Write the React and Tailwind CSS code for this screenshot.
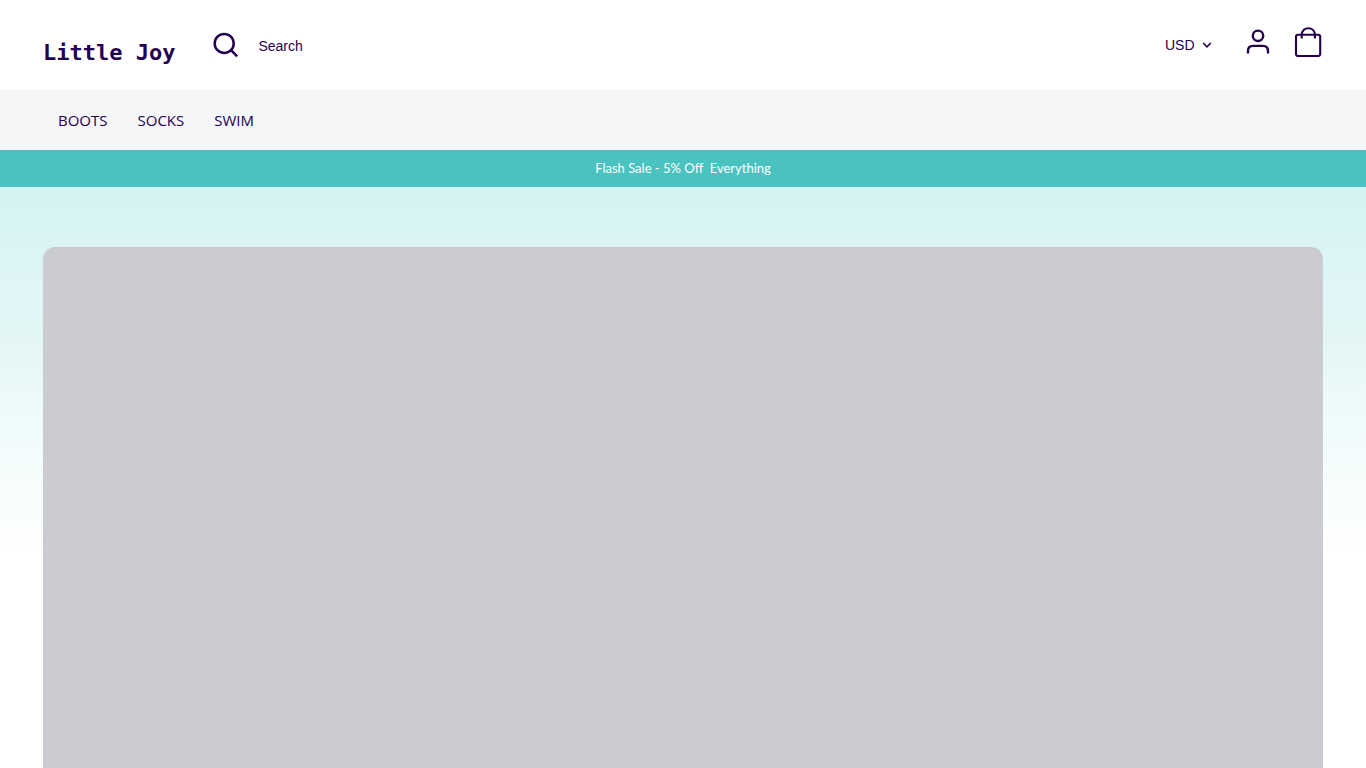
import React, { useState } from 'react';

const links = ['Boots', 'Socks', 'Swim'];

const Header = () => {
  const [query, setQuery] = useState('');

  return (
    <header className="flex h-[90px] items-center px-[43px] bg-white">
      <a
        href="#home"
        className="mt-4 whitespace-pre font-['DejaVu_Sans_Mono',monospace] text-[22px] leading-8 font-bold"
      >
        Little Joy
      </a>

      <form onSubmit={(e) => e.preventDefault()} className="ml-9 flex flex-1 items-center">
        <button type="submit" aria-label="Submit search" className="shrink-0">
          <svg width="30" height="30" viewBox="0 0 30 30" fill="none" stroke="currentColor" strokeWidth="2.5">
            <circle cx="13.2" cy="13.4" r="9.5" />
            <path d="M20 20.2l6.2 6.2" />
          </svg>
        </button>
        <input
          type="text"
          aria-label="Search"
          placeholder="Search"
          value={query}
          onChange={(e) => setQuery(e.target.value)}
          className="ml-[17px] w-full bg-transparent pt-0.5 text-sm placeholder:text-[#240050] outline-none"
        />
      </form>

      <div className="flex items-center">
        <div className="flex items-center gap-[7px]">
          <select aria-label="Currency" className="appearance-none bg-transparent text-sm outline-none">
            <option>USD</option>
          </select>
          <svg width="10" height="10" viewBox="0 0 10 10" fill="none" stroke="currentColor" strokeWidth="1.6">
            <path d="M1.2 3l3.8 3.8L8.8 3" />
          </svg>
        </div>
        <a href="#account" aria-label="Account" className="mb-2 ml-8">
          <svg width="28" height="30" viewBox="0 0 28 30" fill="none" stroke="currentColor" strokeWidth="2.4">
            <circle cx="14" cy="9.8" r="5.2" />
            <path d="M4 27.4v-2.5c0-3 2-5 5-5h10c3 0 5 2 5 5v2.5" />
          </svg>
        </a>
        <a href="#cart" aria-label="Cart" className="mb-2 ml-[21px]">
          <svg width="30" height="32" viewBox="0 0 30 32" fill="none" stroke="currentColor" strokeWidth="2.1">
            <rect x="3" y="9.8" width="24.2" height="21.2" rx="2" />
            <path d="M8.7 13.5V10c0-4.2 3-6.7 6.6-6.7S21.900 5.800 21.900 10v3.500" />
          </svg>
        </a>
      </div>
    </header>
  );
};

const App = () => {
  return (
    <div className="min-h-screen overflow-hidden bg-white font-['Liberation_Sans',Arial,sans-serif] text-[#240050]">
      <Header />

      <nav className="flex h-[60px] items-center gap-[30px] bg-[#f4f6f8] px-[58px] font-['Open_Sans',sans-serif] text-[15px]">
        {links.map((link) => (
          <a key={link} href={`#${link.toLowerCase()}`} className="uppercase">
            {link}
          </a>
        ))}
      </nav>

      <p className="flex h-[37px] items-center justify-center whitespace-pre bg-[#4ac2c0] font-[Lato,sans-serif] text-[13px] text-white">
        {'Flash Sale - 5% Off  Everything'}
      </p>

      <main className="bg-[linear-gradient(180deg,#d5f3f2_0px,#daf5f3_60px,#e0f5f8_100px,#e0f5f4_130px,#effbfb_230px,#ffffff_365px)] px-[43px] pt-[60px]">
        <section aria-label="Featured" className="h-[calc(100vh-247px)] rounded-t-xl bg-[#cbccd1]" />
      </main>
    </div>
  );
};

export default App;
